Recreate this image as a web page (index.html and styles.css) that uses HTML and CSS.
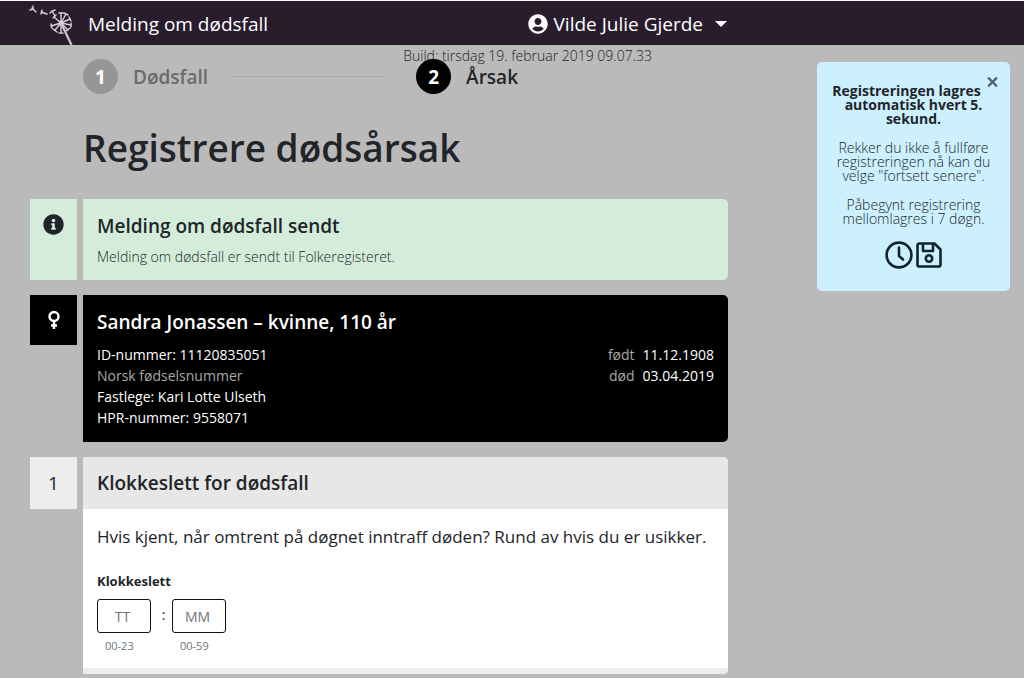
FILE: index.html
```html
<!DOCTYPE html>
<html lang="nb">
<head>
<meta charset="utf-8">
<meta name="viewport" content="width=device-width, initial-scale=1">
<title>Melding om dødsfall</title>
<link rel="stylesheet" href="styles.css">
</head>
<body>
<header class="topbar">
  <div class="topbar-inner">
    <svg class="logo" viewBox="0 0 46 44" aria-hidden="true">
      <g stroke="#d8ced8" stroke-width="1.4" fill="none" stroke-linecap="round">
        <path d="M4 7l4 4M2 9l3-1 0-3M13 11l6 2M13 13l1-2 0-2M24 10l3 5M22 12l2-2 3-1"/>
        <path d="M33 22L33 12M33 22L38 13M33 22L42 18M33 22L43 24M33 22L40 29M33 22L33 31M33 22L27 29M33 22L23 25M33 22L26 16"/>
        <path d="M31 12h4M36 12l4 2M41 16l2 4M43 22v4M38 30l4-3M31 32h4M25 28l4 3M23 23l1 4M25 17l3-3"/>
      </g>
      <circle cx="33" cy="22" r="2.5" fill="#d8ced8"/>
      <path d="M33 22l10.500 22" stroke="#cfc5cf" stroke-width="2.200"/>
    </svg>
    <a class="brand" href="#">Melding om dødsfall</a>
    <button class="user" type="button">
      <svg class="user-icon" viewBox="0 0 496 512" aria-hidden="true"><path fill="#fff" d="M248 8C111 8 0 119 0 256s111 248 248 248 248-111 248-248S385 8 248 8zm0 96c48.600 0 88 39.400 88 88s-39.400 88-88 88-88-39.400-88-88 39.400-88 88-88zm0 344c-58.700 0-111.300-26.600-146.500-68.200 18.800-35.400 55.600-59.800 98.500-59.800 2.400 0 4.800.4 7.100 1.100 13 4.200 26.600 6.900 40.900 6.900s28-2.700 40.900-6.900c2.300-.7 4.700-1.100 7.100-1.100 42.900 0 79.700 24.400 98.500 59.800C359.300 421.400 306.700 448 248 448z"/></svg>
      <span>Vilde Julie Gjerde</span>
      <span class="caret"></span>
    </button>
    <p class="build">Build: tirsdag 19. februar 2019 09.07.33</p>
  </div>
</header>
<div class="page">
  <main class="main">
    <div class="intro">
      <ol class="steps">
        <li class="step"><span class="step-no">1</span><span class="step-name">Dødsfall</span></li>
        <li class="step-line" aria-hidden="true"></li>
        <li class="step step-active"><span class="step-no">2</span><span class="step-name">Årsak</span></li>
      </ol>
      <h1 class="title">Registrere dødsårsak</h1>
    </div>

    <section class="block">
      <div class="tab tab-success">
        <svg class="info-icon" viewBox="0 0 512 512" aria-hidden="true"><path fill="#212529" d="M256 8C119 8 8 119 8 256s111 248 248 248 248-111 248-248S393 8 256 8zm0 110c23.200 0 42 18.800 42 42s-18.800 42-42 42-42-18.800-42-42 18.800-42 42-42zm56 254c0 6.600-5.400 12-12 12h-88c-6.600 0-12-5.400-12-12v-24c0-6.600 5.400-12 12-12h12v-64h-12c-6.600 0-12-5.400-12-12v-24c0-6.600 5.400-12 12-12h64c6.600 0 12 5.400 12 12v100h12c6.600 0 12 5.400 12 12v24z"/></svg>
      </div>
      <div class="card card-success">
        <h2 class="heading">Melding om dødsfall sendt</h2>
        <p class="small">Melding om dødsfall er sendt til Folkeregisteret.</p>
      </div>
    </section>

    <section class="block">
      <div class="tab tab-dark">
        <svg class="sex-icon" viewBox="0 0 14 20" fill="none" stroke="#fff" stroke-width="2.4" aria-hidden="true"><circle cx="7" cy="6.500" r="4.500"/><path d="M7 11v8M4 15.500h6"/></svg>
      </div>
      <div class="card card-dark">
        <h2 class="heading">Sandra Jonassen – kvinne, 110 år</h2>
        <div class="person">
          <ul class="facts">
            <li>ID-nummer: 11120835051</li>
            <li class="muted">Norsk fødselsnummer</li>
            <li>Fastlege: Kari Lotte Ulseth</li>
            <li>HPR-nummer: 9558071</li>
          </ul>
          <dl class="dates">
            <dt>født</dt><dd>11.12.1908</dd>
            <dt>død</dt><dd>03.04.2019</dd>
          </dl>
        </div>
      </div>
    </section>

    <section class="block">
      <div class="tab tab-number">1</div>
      <div class="card card-form">
        <h2 class="heading card-head">Klokkeslett for dødsfall</h2>
        <div class="card-body">
          <p class="question">Hvis kjent, når omtrent på døgnet inntraff døden? Rund av hvis du er usikker.</p>
          <fieldset class="time">
            <legend class="time-label">Klokkeslett</legend>
            <div class="time-row">
              <div class="time-field">
                <input class="time-input" id="hour" type="text" placeholder="TT" aria-label="Timer">
                <label class="hint" for="hour">00-23</label>
              </div>
              <span class="colon">:</span>
              <div class="time-field">
                <input class="time-input" id="minute" type="text" placeholder="MM" aria-label="Minutter">
                <label class="hint" for="minute">00-59</label>
              </div>
            </div>
          </fieldset>
        </div>
        <div class="card-foot"></div>
      </div>
    </section>
  </main>

  <aside class="notice">
    <button class="close" type="button" aria-label="Lukk"><svg class="close-icon" viewBox="0 0 10 10" aria-hidden="true"><path d="M1 1l8 8M9 1L1 9" stroke="#56626a" stroke-width="2"/></svg></button>
    <p class="notice-title">Registreringen lagres automatisk hvert 5. sekund.</p>
    <p>Rekker du ikke å fullføre registreringen nå kan du velge "fortsett senere".</p>
    <p>Påbegynt registrering mellomlagres i 7 døgn.</p>
    <div class="notice-icons">
      <svg class="clock-icon" viewBox="0 0 28 28" fill="none" stroke="#13232b" stroke-width="2.600" aria-hidden="true"><circle cx="14" cy="14" r="12.400"/><path d="M14 6.500V15l4 3.500" stroke-linecap="round"/></svg>
      <svg class="save-icon" viewBox="0 0 26 26" fill="none" stroke="#13232b" stroke-width="2.600" stroke-linejoin="round" aria-hidden="true"><path d="M3.300 1.500H18.500L24.500 7.500V22.700a1.800 1.800 0 0 1-1.800 1.800H3.300a1.800 1.800 0 0 1-1.800-1.800V3.300A1.800 1.800 0 0 1 3.300 1.500z"/><path d="M7 2v7h10V2"/><circle cx="13" cy="16.500" r="3.200"/></svg>
    </div>
  </aside>
</div>
</body>
</html>
```
FILE: styles.css
```css
* { box-sizing: border-box; }

body {
  margin: 0;
  background: #bababa;
  color: #212529;
  font-family: "Open Sans", "Noto Sans", sans-serif;
  font-size: 14px;
  line-height: 21px;
}

h1, h2, p, ul, ol, dl, dd, fieldset { margin: 0; padding: 0; }
ul, ol { list-style: none; }
fieldset { border: 0; }
button { font: inherit; border: 0; background: none; padding: 0; cursor: pointer; }

.topbar {
  background: #291d2d;
  border-top: 1px solid #fff;
  padding: 0 297px 0 28px;
}

.topbar-inner {
  position: relative;
  display: flex;
  align-items: center;
  height: 44px;
}

.logo { width: 46px; height: 44px; margin-right: 14px; }

.brand {
  padding-top: 2px;
  color: #fff;
  font-size: 19px;
  line-height: 28px;
  text-decoration: none;
}

.user {
  display: flex;
  align-items: center;
  gap: 6px;
  margin-left: auto;
  padding-top: 2px;
  color: #fff;
  font-size: 19px;
  line-height: 28px;
}

.user-icon { width: 20px; height: 20px; }

.caret {
  margin-left: 6px;
  border: 6px solid transparent;
  border-top-color: #fff;
  border-bottom: 0;
}

.build {
  position: absolute;
  top: 44px;
  right: 75px;
  font-size: 14px;
  font-weight: 300;
  white-space: nowrap;
}

.page {
  display: flex;
  align-items: flex-start;
  gap: 89px;
  padding: 14px 14px 4px 30px;
}

.main { flex: 1; min-width: 0; }

.intro { padding: 0 0 23px 53px; }

.steps { position: relative; display: flex; align-items: center; }

.step {
  display: flex;
  align-items: center;
  gap: 15px;
  color: #6b6b6b;
  font-size: 19px;
  font-weight: 600;
  line-height: 28px;
}

.step-no {
  display: flex;
  align-items: center;
  justify-content: center;
  width: 35px;
  height: 35px;
  border-radius: 50%;
  background: #969696;
  color: #fff;
  font-weight: 700;
}

.step-active { color: #212529; }
.step-active .step-no { background: #000; }
.step-line { width: 156px; margin: 0 30px 0 22px; border-top: 1px solid #a9a9a9; }

.title {
  margin-top: 26px;
  font-size: 37px;
  font-weight: 600;
  line-height: 56px;
}

.block {
  display: grid;
  grid-template-columns: 47px 1fr;
  gap: 6px;
  align-items: start;
  margin-bottom: 15px;
}

.block:last-child { margin-bottom: 0; }

.tab { display: flex; justify-content: center; }
.tab-success { align-self: stretch; background: #d4edda; padding-top: 15px; }
.tab-dark { background: #000; height: 50px; align-items: center; }
.tab-number { background: #ededed; height: 52px; align-items: center; font-size: 19px; }

.info-icon { width: 21px; height: 21px; }
.sex-icon { width: 14px; height: 20px; }

.card { border-radius: 0 5px 5px 0; overflow: hidden; }
.card-success { background: #d4edda; padding: 13px 14px; }
.card-dark { background: #000; color: #fff; padding: 13px 14px 14px; }
.card-form { background: #fff; }

.heading { font-size: 19px; font-weight: 600; line-height: 28px; }
.card-head { background: #e7e7e7; padding: 12px 14px; }

.small { margin-top: 6px; font-weight: 300; }

.person { display: flex; justify-content: space-between; margin-top: 8px; }
.muted { color: #a8a8a8; }

.dates { display: grid; grid-template-columns: auto auto; column-gap: 8px; align-content: start; text-align: right; }
.dates dt { color: #a8a8a8; }

.card-body { padding: 14px; }
.question { font-size: 17px; line-height: 28px; }

.time { margin-top: 20px; }
.time-label { padding: 0; font-size: 13px; font-weight: 700; }
.time-row { display: flex; margin-top: 7px; }
.time-field { display: flex; flex-direction: column; width: 54px; }

.time-input {
  width: 100%;
  height: 34px;
  border: 1px solid #111;
  border-radius: 3px;
  background: #fff;
  color: #212529;
  font: inherit;
  padding: 0 3px 0 0;
  text-align: center;
}

.time-input::placeholder { color: #6c757d; opacity: 1; }
.hint { padding: 5px 0 0 8px; color: #6c757d; font-size: 11px; line-height: 16px; }
.colon { width: 21px; padding: 5px 0 0 4px; text-align: center; }
.card-foot { height: 6px; background: #ededed; }

.notice {
  width: 193px;
  margin-top: 3px;
  padding: 14px 12px 22px;
  border-radius: 5px;
  background: #cdf0fe;
  font-weight: 300;
  line-height: 14px;
  text-align: center;
}

.notice p { margin-bottom: 15px; }
.notice .notice-title { padding-top: 8px; font-weight: 700; }

.close { float: right; display: flex; justify-content: flex-end; width: 14px; }
.close-icon { width: 11px; height: 12px; }

.notice-icons { display: flex; justify-content: center; gap: 3px; }
.clock-icon { width: 28px; height: 28px; }
.save-icon { width: 26px; height: 28px; }
```
